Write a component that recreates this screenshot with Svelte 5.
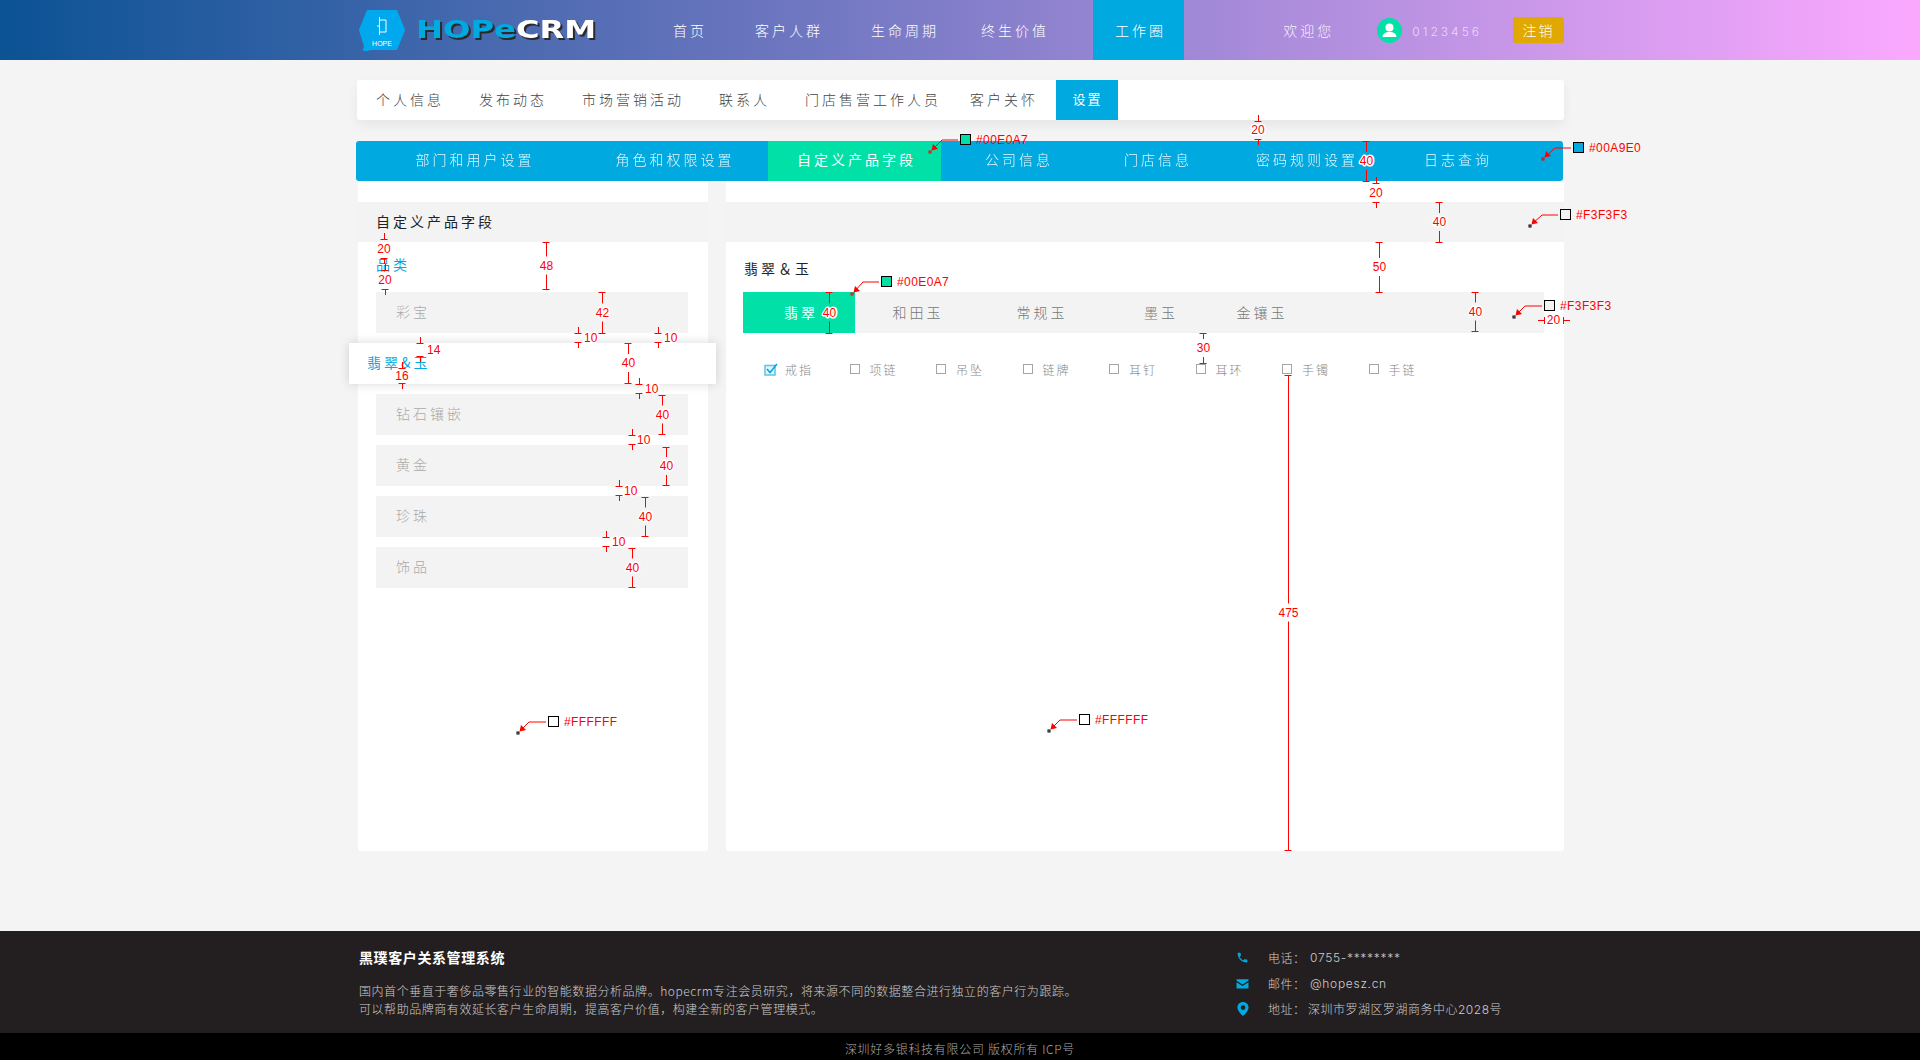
<script>
	const nav = ['首页', '客户人群', '生命周期', '终生价值']
	const tabs = ['个人信息', '发布动态', '市场营销活动', '联系人', '门店售营工作人员', '客户关怀']
	const settings = ['部门和用户设置', '角色和权限设置', '自定义产品字段', '公司信息', '门店信息', '密码规则设置', '日志查询']
	const categories = ['彩宝', '翡翠&玉', '钻石镶嵌', '黄金', '珍珠', '饰品']
	const jadeTabs = ['翡翠', '和田玉', '常规玉', '墨玉', '金镶玉']
	const kinds = ['戒指', '项链', '吊坠', '链牌', '耳钉', '耳环', '手镯', '手链']

	// redline annotations drawn over the design
	const spans = [
		{ x: 1366, y1: 141, y2: 181, t: '40' },
		{ x: 1439, y1: 202, y2: 242, t: '40' },
		{ x: 1379, y1: 242, y2: 292, t: '50' },
		{ x: 829, y1: 292, y2: 333, t: '40' },
		{ x: 1475, y1: 292, y2: 331, t: '40' },
		{ x: 1203, y1: 333, y2: 363, t: '30' },
		{ x: 1288, y1: 375, y2: 850, t: '475' },
		{ x: 546, y1: 242, y2: 289, t: '48' },
		{ x: 602, y1: 292, y2: 333, t: '42' },
		{ x: 628, y1: 343, y2: 383, t: '40' },
		{ x: 662, y1: 395, y2: 434, t: '40' },
		{ x: 666, y1: 447, y2: 485, t: '40' },
		{ x: 645, y1: 497, y2: 536, t: '40' },
		{ x: 632, y1: 548, y2: 587, t: '40' }
	]
	const ticks = [
		{ x: 1258, y1: 121, y2: 139, t: '20' },
		{ x: 1376, y1: 183, y2: 202, t: '20' },
		{ x: 384, y1: 239, y2: 258, t: '20' },
		{ x: 385, y1: 270, y2: 289, t: '20' },
		{ x: 420, y1: 343, y2: 356, t: '14', lx: 427 },
		{ x: 402, y1: 368, y2: 383, t: '16' },
		{ x: 578, y1: 333, y2: 342, t: '10', lx: 584 },
		{ x: 658, y1: 333, y2: 342, t: '10', lx: 664 },
		{ x: 639, y1: 384, y2: 393, t: '10', lx: 645 },
		{ x: 632, y1: 435, y2: 444, t: '10', lx: 637 },
		{ x: 619, y1: 486, y2: 495, t: '10', lx: 624 },
		{ x: 606, y1: 537, y2: 546, t: '10', lx: 612 }
	]
	const pins = [
		{ x: 930, y: 152, bx: 942, by: 140, ex: 958, c: '#00E0A7', dot: '#f00' },
		{ x: 1543, y: 159, bx: 1555, by: 148, ex: 1571, c: '#00A9E0', dot: '#f00' },
		{ x: 1530, y: 226, bx: 1542, by: 215, ex: 1558, c: '#F3F3F3', dot: '#000' },
		{ x: 852, y: 294, bx: 863, by: 282, ex: 879, c: '#00E0A7', dot: '#f00' },
		{ x: 1514, y: 317, bx: 1525, by: 306, ex: 1542, c: '#F3F3F3', dot: '#000' },
		{ x: 518, y: 733, bx: 529, by: 722, ex: 546, c: '#FFFFFF', dot: '#000' },
		{ x: 1049, y: 731, bx: 1060, by: 720, ex: 1077, c: '#FFFFFF', dot: '#000' }
	]
</script>

<div class="page">
	<header class="top">
		<svg class="logo-mark" viewBox="0 0 46 42" width="46" height="42">
			<path d="M9 2.500h28l7.500 18.500-7.500 18.500H12l-6.500 1.500 1-4L1.500 21z" fill="#00a9ee" stroke="#00a9ee" stroke-width="3" stroke-linejoin="round" />
			<path d="M20.500 8v18M20.500 11h6.500v12h-6.500M18 17h2.500" fill="none" stroke="#fff" stroke-width="1" />
			<text x="23" y="37" text-anchor="middle" class="hope">HOPE</text>
		</svg>
		<svg class="logo-word" viewBox="0 0 186 28" width="186" height="28">
			<text x="0" y="21" textLength="100" lengthAdjust="spacingAndGlyphs" class="word blue">HOPe</text>
			<text x="100" y="21" textLength="80" lengthAdjust="spacingAndGlyphs" class="word white">CRM</text>
		</svg>

		<nav class="nav">
			{#each nav as item}
				<span class="nav-item">{item}</span>
			{/each}
		</nav>
		<span class="nav-current">工作圈</span>

		<div class="user">
			<span class="welcome">欢迎您</span>
			<svg class="avatar" viewBox="0 0 25 25" width="25" height="25">
				<circle cx="12.500" cy="12.500" r="12.500" fill="#00e0a7" />
				<circle cx="12.500" cy="9.500" r="4" fill="#fff" />
				<path d="M5.500 19c0-3.500 3-5 7-5s7 1.500 7 5z" fill="#fff" />
			</svg>
			<span class="uid">0123456</span>
			<span class="logout">注销</span>
		</div>
	</header>

	<main class="content">
		<div class="tabs">
			{#each tabs as tab}
				<span class="tab">{tab}</span>
			{/each}
			<span class="tab tab-on">设置</span>
		</div>

		<div class="bar">
			{#each settings as item, i}
				<span class="bar-item" class:on={i === 2}>{item}</span>
			{/each}
		</div>

		<div class="panels">
			<section class="panel left">
				<h3 class="strip">自定义产品字段</h3>
				<div class="cat-label">品类</div>
				<ul class="cats">
					{#each categories as cat, i}
						<li class="cat" class:picked={i === 1}>{cat}</li>
					{/each}
				</ul>
			</section>

			<section class="panel right">
				<div class="strip"></div>
				<h4 class="jade-title">翡翠＆玉</h4>
				<div class="jade-tabs">
					{#each jadeTabs as tab, i}
						<span class="jade-tab" class:on={i === 0}>{tab}</span>
					{/each}
				</div>
				<div class="checks">
					{#each kinds as kind, i}
						<label class="check">
							{#if i === 0}
								<svg class="box-on" viewBox="0 0 14 13" width="14" height="13">
									<rect x="1" y="2.500" width="10" height="9.500" fill="#e2f5fc" stroke="#5cc3ea" stroke-width="1.500" />
									<path d="M3 6l3 3.500 7-8.500" fill="none" stroke="#00a9e0" stroke-width="1.600" />
								</svg>
							{:else}
								<span class="box"></span>
							{/if}
							{kind}
						</label>
					{/each}
				</div>
			</section>
		</div>
	</main>

	<footer class="foot">
		<div class="foot-main">
			<div class="about">
				<h5>黑璞客户关系管理系统</h5>
				<p>国内首个垂直于奢侈品零售行业的智能数据分析品牌。hopecrm专注会员研究，将来源不同的数据整合进行独立的客户行为跟踪。</p>
				<p>可以帮助品牌商有效延长客户生命周期，提高客户价值，构建全新的客户管理模式。</p>
			</div>
			<div class="contact">
				<svg viewBox="0 0 24 24" width="13" height="13"><path fill="#00a9e0" d="M6.600 10.800c1.400 2.800 3.800 5.100 6.600 6.600l2.200-2.200c.3-.3.700-.4 1-.2 1.100.4 2.300.6 3.600.6.600 0 1 .4 1 1V20c0 .6-.4 1-1 1C10.600 21 3 13.400 3 4c0-.6.400-1 1-1h3.500c.6 0 1 .4 1 1 0 1.300.2 2.500.6 3.600.1.300 0 .7-.2 1z" /></svg>
				<span>电话：</span><span class="val">0755-********</span>
				<svg viewBox="0 0 24 24" width="13" height="13"><path fill="#00a9e0" d="M1 4h22v3l-11 7L1 7zm0 5.500V21h22V9.500l-11 7z" /></svg>
				<span>邮件：</span><span class="val">@hopesz.cn</span>
				<svg viewBox="0 0 24 24" width="14" height="16"><path fill="#00a9e0" fill-rule="evenodd" d="M12 0C6.500 0 2.500 4 2.500 9.300 2.500 16 12 24 12 24s9.500-8 9.500-14.700C21.500 4 17.500 0 12 0zm0 5.500a4 4 0 1 1 0 8 4 4 0 0 1 0-8z" /></svg>
				<span>地址：</span><span class="val addr">深圳市罗湖区罗湖商务中心2028号</span>
			</div>
		</div>
		<div class="copy">深圳好多银科技有限公司 版权所有 ICP号</div>
	</footer>

	<svg class="redlines" viewBox="0 0 1920 1060" width="1920" height="1060">
		{#each spans as s}
			{@const mid = (s.y1 + s.y2) / 2}
			<path d="M{s.x - 3.500} {s.y1 + 0.500}h7M{s.x - 3.500} {s.y2 + 0.500}h7M{s.x + 0.500} {s.y1}V{mid - 9}M{s.x + 0.500} {mid + 9}V{s.y2}" />
			<text x={s.x + 0.500} y={mid} text-anchor="middle" class="halo">{s.t}</text>
		{/each}
		{#each ticks as k}
			<path d="M{k.x - 3.500} {k.y1 + 0.500}h7M{k.x + 0.500} {k.y1 - 6}v6M{k.x - 3.500} {k.y2 + 0.500}h7M{k.x + 0.500} {k.y2}v6" />
			{#if k.lx}
				<text x={k.lx} y={(k.y1 + k.y2) / 2} class="halo">{k.t}</text>
			{:else}
				<text x={k.x} y={(k.y1 + k.y2) / 2} text-anchor="middle" class="halo">{k.t}</text>
			{/if}
		{/each}
		<path d="M1538 320.500h6M1544.500 317v7M1563.500 317v7M1564 320.500h6" />
		<text x="1553.500" y="320" text-anchor="middle" class="halo">20</text>
		{#each pins as p}
			<rect class="dot" x={p.x - 1} y={p.y - 1} width="2" height="2" style="fill: {p.c}; stroke: {p.dot}" />
			<path d="M{p.x + 2} {p.y - 2}L{p.bx} {p.by}H{p.ex}" />
			<path class="head" d="M{p.x + 1.500} {p.y - 1.500}l6.500-1.500-5-5z" />
			<rect class="swatch" x={p.ex + 2.500} y={p.by - 5.500} width="10" height="10" style="fill: {p.c}" />
			<text x={p.ex + 18} y={p.by} class="hex">{p.c}</text>
		{/each}
	</svg>
</div>

<style>
	:global(body) {
		margin: 0;
		background: #f4f4f4;
	}

	.page {
		position: relative;
		width: 1920px;
		height: 1060px;
		overflow: hidden;
		display: flex;
		flex-direction: column;
		font-family: "Noto Sans CJK SC", "Noto Sans", sans-serif;
		font-weight: 300;
		font-size: 14px;
	}

	/* header */
	.top {
		height: 60px;
		flex: none;
		display: flex;
		align-items: center;
		padding: 0 356px 0 359px;
		background: linear-gradient(90deg, #0b5394, #fba9ff);
		color: #fff;
	}

	.hope {
		font: 7px "Liberation Sans", sans-serif;
		fill: #fff;
	}

	.logo-word {
		margin-left: 11px;
		margin-top: 2px;
		filter: drop-shadow(2px 2px 0 #2a2a2a);
	}

	.word {
		font: 700 24px "DejaVu Sans", sans-serif;
	}

	.blue {
		fill: #00a9e0;
	}

	.white {
		fill: #fff;
	}

	.nav {
		display: flex;
		margin-left: 47px;
	}

	.nav-item {
		padding: 0 24px;
		letter-spacing: 3px;
		white-space: nowrap;
	}

	.nav-item:nth-child(4) {
		margin-left: -6px;
	}

	.nav-current {
		width: 87px;
		height: 60px;
		padding-left: 4px;
		margin-left: 20px;
		display: grid;
		place-items: center;
		background: #00a9e0;
		letter-spacing: 3px;
	}

	.user {
		margin-left: auto;
		display: flex;
		align-items: center;
	}

	.welcome {
		letter-spacing: 3px;
		margin-right: 43px;
		color: rgb(255 255 255 / 0.9);
	}

	.uid {
		margin-left: 10px;
		margin-right: 31px;
		font-family: "Inter", sans-serif;
		font-size: 12px;
		letter-spacing: 3px;
		color: rgb(255 255 255 / 0.65);
		padding-top: 3px;
	}

	.logout {
		width: 51px;
		height: 26px;
		display: grid;
		place-items: center;
		background: #e0a800;
		border-radius: 3px;
		letter-spacing: 2px;
		font-size: 14px;
	}

	/* content */
	.content {
		flex: 1;
		width: 1207px;
		margin-left: 357px;
		padding-top: 20px;
	}

	.tabs {
		height: 40px;
		display: flex;
		padding-left: 1.500px;
		background: #fff;
		border-radius: 3px;
		box-shadow: 0 5px 12px rgb(0 0 0 / 0.06);
		color: #444;
		line-height: 38px;
	}

	.tab {
		padding: 0 17.500px;
		letter-spacing: 3px;
		white-space: nowrap;
	}

	.tab:nth-child(5) {
		margin-right: -6px;
	}

	.tab-on {
		background: #00a9e0;
		color: #fff;
		letter-spacing: 2px;
		padding: 0 15px 0 17px;
		font-size: 13px;
		font-weight: 400;
	}

	.bar {
		height: 40px;
		margin: 21px 1px 0 -1px;
		display: grid;
		grid-template-columns: 222px 190px 173px 152px 126px 172px 130px auto;
		background: #00a9e0;
		border-radius: 3px;
		color: #fff;
		line-height: 36px;
		text-align: center;
	}

	.bar-item {
		padding-left: 4px;
		letter-spacing: 3px;
		white-space: nowrap;
		opacity: 0.9;
	}

	.bar-item:first-child {
		padding-left: 16px;
	}

	.bar-item.on {
		background: #00e0a7;
		font-weight: 400;
		opacity: 1;
	}

	.panels {
		display: flex;
		padding-left: 1px;
		gap: 18px;
	}

	.panel {
		height: 670px;
		padding-top: 21px;
		box-sizing: border-box;
		background: #fff;
		border-radius: 0 0 3px 3px;
	}

	.left {
		width: 350px;
	}

	.right {
		flex: 1;
	}

	.strip {
		height: 40px;
		margin: 0;
		padding-left: 18px;
		background: #f3f3f3;
		font-size: 14px;
		font-weight: 400;
		line-height: 38px;
		letter-spacing: 3px;
		color: #222;
	}

	.cat-label {
		margin: 12px 0 0 18px;
		height: 20px;
		line-height: 20px;
		color: #00a9e0;
		font-size: 14px;
		font-weight: 400;
		letter-spacing: 3px;
	}

	.cats {
		list-style: none;
		margin: 18px 20px 0 18px;
		padding: 0;
		display: flex;
		flex-direction: column;
		gap: 10px;
	}

	.cat {
		height: 41px;
		padding-left: 20px;
		background: #f3f3f3;
		color: #aaa;
		line-height: 39px;
		letter-spacing: 3px;
		font-size: 14px;
	}

	.cat.picked {
		margin: 0 -28px 0 -27px;
		padding-left: 18px;
		background: #fff;
		color: #00a9e0;
		font-weight: 400;
		box-shadow: 0 0 10px rgb(0 0 0 / 0.15);
		position: relative;
	}

	.jade-title {
		margin: 17px 0 0 18px;
		height: 20px;
		line-height: 18px;
		font-size: 14px;
		font-weight: 400;
		letter-spacing: 3px;
		color: #222;
	}

	.jade-tabs {
		margin: 13px 20px 0 17px;
		height: 41px;
		display: grid;
		grid-template-columns: 112px 122px 126px 112px 90px;
		background: #f3f3f3;
		color: #777;
		line-height: 41px;
		text-align: center;
		letter-spacing: 3px;
	}

	.jade-tab {
		padding-left: 4px;
	}

	.jade-tab.on {
		background: #00e0a7;
		color: #fff;
		font-weight: 400;
	}

	.checks {
		display: flex;
		margin: 27px 0 0 38px;
	}

	.check {
		width: 86.500px;
		height: 18px;
		flex: none;
		display: flex;
		align-items: center;
		gap: 10px;
		color: #888;
		font-size: 12px;
		letter-spacing: 2px;
	}

	.box {
		width: 8px;
		height: 8px;
		margin-left: -1px;
		border: 1.500px solid #a5a5a5;
		flex: none;
	}

	.box-on {
		flex: none;
		margin-right: -3px;
	}

	/* footer */
	.foot {
		flex: none;
	}

	.foot-main {
		height: 102px;
		box-sizing: border-box;
		padding: 16px 0 0 359px;
		display: flex;
		background: #231f20;
		color: #ccc;
		font-size: 12px;
	}

	.about {
		width: 877px;
		flex: none;
	}

	.about h5 {
		margin: 0 0 15px;
		font-size: 14px;
		font-weight: 700;
		line-height: 20px;
		color: #fff;
		letter-spacing: 0.600px;
	}

	.about p {
		margin: 0;
		line-height: 18px;
		letter-spacing: 0.550px;
	}

	.contact {
		display: grid;
		grid-template-columns: 32px 42px auto;
		grid-auto-rows: 25.500px;
		align-items: center;
		align-content: start;
		margin-top: -2px;
		letter-spacing: 0.500px;
	}

	.val {
		font-family: "Inter", "Noto Sans CJK SC", sans-serif;
		font-weight: 300;
		letter-spacing: 0.700px;
	}

	.addr {
		margin-left: -2px;
		letter-spacing: 0.500px;
	}

	.copy {
		height: 27px;
		background: #000;
		color: #aaa;
		font-size: 12px;
		line-height: 31px;
		letter-spacing: 0.700px;
		text-align: center;
	}

	/* redlines */
	.redlines {
		position: absolute;
		inset: 0;
		pointer-events: none;
	}

	.redlines path {
		fill: none;
		stroke: #f00;
		stroke-width: 1;
	}

	.redlines path.head {
		fill: #f00;
		stroke: none;
	}

	.redlines text {
		font: 12px "Liberation Sans", sans-serif;
		fill: #f00;
		dominant-baseline: central;
	}

	.redlines .halo {
		paint-order: stroke;
		stroke: #fff;
		stroke-width: 3px;
		stroke-linejoin: round;
	}

	.redlines .hex {
		letter-spacing: 0.400px;
	}

	.swatch {
		stroke: #000;
		stroke-width: 1;
	}

	.dot {
		stroke-width: 1;
	}
</style>
